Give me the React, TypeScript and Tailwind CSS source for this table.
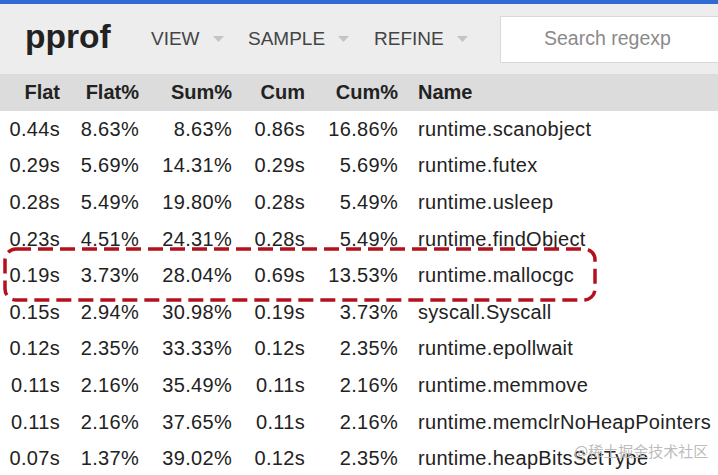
import React from 'react';

type Row = [string, string, string, string, string, string];

const rows: Row[] = [
  ['0.44s', '8.63%', '8.63%', '0.86s', '16.86%', 'runtime.scanobject'],
  ['0.29s', '5.69%', '14.31%', '0.29s', '5.69%', 'runtime.futex'],
  ['0.28s', '5.49%', '19.80%', '0.28s', '5.49%', 'runtime.usleep'],
  ['0.23s', '4.51%', '24.31%', '0.28s', '5.49%', 'runtime.findObject'],
  ['0.19s', '3.73%', '28.04%', '0.69s', '13.53%', 'runtime.mallocgc'],
  ['0.15s', '2.94%', '30.98%', '0.19s', '3.73%', 'syscall.Syscall'],
  ['0.12s', '2.35%', '33.33%', '0.12s', '2.35%', 'runtime.epollwait'],
  ['0.11s', '2.16%', '35.49%', '0.11s', '2.16%', 'runtime.memmove'],
  ['0.11s', '2.16%', '37.65%', '0.11s', '2.16%', 'runtime.memclrNoHeapPointers'],
  ['0.07s', '1.37%', '39.02%', '0.12s', '2.35%', 'runtime.heapBitsSetType'],
];

const headers = ['Flat', 'Flat%', 'Sum%', 'Cum', 'Cum%', 'Name'];

// column grid: right edges at 60 / 139 / 232 / 305 / 398, name starts at 418
const cols = 'grid grid-cols-[60px_79px_93px_73px_93px_1fr]';

const Caret = () => (
  <svg width="11" height="6" viewBox="0 0 11 6" className="ml-[13px]">
    <path d="M0 0 L11 0 L5.5 6 Z" fill="#c4c4c4" />
  </svg>
);

const NavItem = ({ label, className }: { label: string; className?: string }) => (
  <div className={`flex items-center text-[19px] text-[#444] ${className ?? ''}`}>
    <span>{label}</span>
    <Caret />
  </div>
);

const HighlightBox = () => (
  <svg
    className="absolute left-[3px] top-[-10px] pointer-events-none"
    width="594"
    height="55"
    viewBox="0 0 594 55"
  >
    <rect
      x="2"
      y="2"
      width="590"
      height="51"
      rx="11"
      ry="11"
      fill="none"
      stroke="#b3111c"
      strokeWidth="3.5"
      strokeDasharray="15 7"
    />
  </svg>
);

export default function App() {
  return (
    <div className="relative w-[718px] h-[475px] overflow-hidden bg-white text-[#222] font-['Liberation_Sans',Arial,sans-serif]">
      <div className="h-[4px] bg-[#2f6bd3]" />

      {/* top bar */}
      <div className="h-[70px] bg-[#ededed] flex items-center">
        <div className="pl-[25px] w-[151px] text-[33.5px] font-bold text-[#222] leading-none pb-[4px]">pprof</div>
        <NavItem label="VIEW" className="w-[97px]" />
        <NavItem label="SAMPLE" className="w-[126px]" />
        <NavItem label="REFINE" className="w-[126px]" />
        <div className="flex-1 h-[47px] bg-white border border-[#d9d9d9] border-r-0 flex items-center pl-[43px] text-[19.5px] text-[#8a8a8a]">
          Search regexp
        </div>
      </div>

      {/* table header */}
      <div className={`${cols} h-[36.6px] items-center bg-[#dcdcdc] text-[20px] font-bold`}>
        {headers.map((h, i) => (
          <div key={h} className={i < 5 ? 'text-right' : 'pl-[20px]'}>
            {h}
          </div>
        ))}
      </div>

      {/* rows */}
      <div>
        {rows.map((r, ri) => (
          <div key={ri} className={`${cols} relative h-[36.6px] items-center text-[20px] tracking-[0.3px]`}>
            {r.map((c, i) => (
              <div key={i} className={i < 5 ? 'text-right' : 'pl-[20px] whitespace-nowrap'}>
                {c}
              </div>
            ))}
            {ri === 4 && <HighlightBox />}
          </div>
        ))}
      </div>

      <div className="absolute left-[574px] top-[443px] text-[15px] text-[#bcbcbc] font-['Noto_Sans_CJK_SC',sans-serif] leading-none pointer-events-none">
        @稀土掘金技术社区
      </div>
    </div>
  );
}
